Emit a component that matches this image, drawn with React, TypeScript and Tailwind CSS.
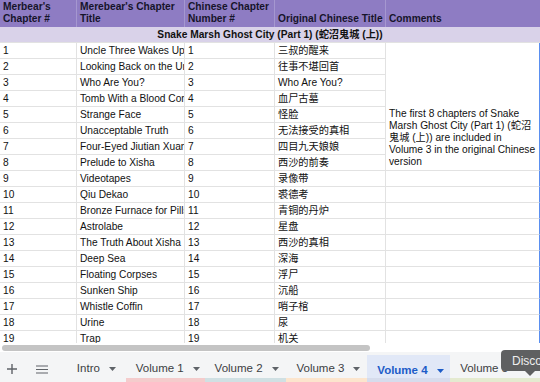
import React from "react";

const rows: [string, string, string, string][] = [
  ["1", "Uncle Three Wakes Up", "1", "三叔的醒来"],
  ["2", "Looking Back on the Unbearable Past", "2", "往事不堪回首"],
  ["3", "Who Are You?", "3", "Who Are You?"],
  ["4", "Tomb With a Blood Corpse", "4", "血尸古墓"],
  ["5", "Strange Face", "5", "怪脸"],
  ["6", "Unacceptable Truth", "6", "无法接受的真相"],
  ["7", "Four-Eyed Jiutian Xuannü", "7", "四目九天娘娘"],
  ["8", "Prelude to Xisha", "8", "西沙的前奏"],
  ["9", "Videotapes", "9", "录像带"],
  ["10", "Qiu Dekao", "10", "裘德考"],
  ["11", "Bronze Furnace for Pills", "11", "青铜的丹炉"],
  ["12", "Astrolabe", "12", "星盘"],
  ["13", "The Truth About Xisha", "13", "西沙的真相"],
  ["14", "Deep Sea", "14", "深海"],
  ["15", "Floating Corpses", "15", "浮尸"],
  ["16", "Sunken Ship", "16", "沉船"],
  ["17", "Whistle Coffin", "17", "哨子棺"],
  ["18", "Urine", "18", "尿"],
  ["19", "Trap", "19", "机关"],
];

const cell =
  "border-r border-b border-[#e2e2e2] px-[3px] leading-[15px] whitespace-nowrap overflow-hidden text-[#111]";
const hcell =
  "border-r border-[#a597d0] px-[3px] pb-[2px] flex items-end leading-[12px] font-bold whitespace-nowrap overflow-hidden text-[#16142a]";

function Arrow({ color }: { color: string }) {
  return (
    <svg width="7" height="4" viewBox="0 0 7 4" className="ml-[9px]">
      <path d="M0 0 L7 0 L3.5 4 Z" fill={color} />
    </svg>
  );
}

function Tab({
  label,
  width,
  strip,
  active,
}: {
  label: string;
  width: string;
  strip?: string;
  active?: boolean;
}) {
  return (
    <div
      className={`relative flex items-center pl-[10px] pt-[4px] ${width} ${
        active ? "bg-[#e1e8f7] mt-[3px] pt-[1px]" : ""
      }`}
    >
      <span
        className={
          active
            ? "text-[11.5px] font-bold text-[#1c5cc8]"
            : "text-[11.5px] text-[#3c4043]"
        }
      >
        {label}
      </span>
      <Arrow color={active ? "#1c5cc8" : "#5f6368"} />
      {strip ? (
        <div className={`absolute left-0 right-0 bottom-0 h-[4px] ${strip}`} />
      ) : null}
    </div>
  );
}

export default function App() {
  return (
    <div className="w-[540px] h-[382px] overflow-hidden relative bg-white font-['Liberation_Sans','Noto_Sans_CJK_SC',sans-serif] text-[10.2px]">
      <div className="h-[343px] overflow-hidden">
        <div className="grid grid-cols-[77px_108px_90px_111px_154px] grid-rows-[27px_16px_repeat(19,16px)]">
          <div className={`${hcell} bg-[#8e7cc3]`}>
            Merbear's
            <br />
            Chapter #
          </div>
          <div className={`${hcell} bg-[#8e7cc3]`}>
            Merebear's Chapter
            <br />
            Title
          </div>
          <div className={`${hcell} bg-[#8e7cc3]`}>
            Chinese Chapter
            <br />
            Number #
          </div>
          <div className={`${hcell} bg-[#8e7cc3]`}>Original Chinese Title</div>
          <div className={`${hcell} bg-[#8e7cc3] border-r-0`}>Comments</div>

          <div className="col-span-5 bg-[#d9d2e9] border-b border-[#e2e2e2] text-center font-bold leading-[15px] text-[#111]">
            Snake Marsh Ghost City (Part 1) (蛇沼鬼城 (上))
          </div>

          {rows.map((r, i) => (
            <React.Fragment key={i}>
              <div className={cell}>{r[0]}</div>
              <div className={cell}>{r[1]}</div>
              <div className={cell}>{r[2]}</div>
              <div className={cell}>{r[3]}</div>
              {i === 0 ? (
                <div className="row-span-8 border-b border-r border-b-[#e2e2e2] border-r-[#5a8ff0] px-[3px] pb-[2px] flex items-end leading-[12px] whitespace-nowrap text-[#111]">
                  <div>
                    The first 8 chapters of Snake
                    <br />
                    Marsh Ghost City (Part 1) (蛇沼
                    <br />
                    鬼城 (上)) are included in
                    <br />
                    Volume 3 in the original Chinese
                    <br />
                    version
                  </div>
                </div>
              ) : i >= 8 ? (
                <div className="border-b border-r border-b-[#e2e2e2] border-r-[#5a8ff0]" />
              ) : null}
            </React.Fragment>
          ))}
        </div>
      </div>

      <div className="h-[9px] bg-white pt-[2px]">
        <div className="ml-[2px] w-[368px] h-[6px] rounded-full bg-[#c4c4c4]" />
      </div>

      <div className="relative h-[30px] bg-[#f4f5f6] flex">
        <div className="w-[24px] flex items-center justify-center pt-[4px]">
          <svg width="10" height="10" viewBox="0 0 10 10">
            <path d="M5 0 V10 M0 5 H10" stroke="#5f6368" strokeWidth="1.4" />
          </svg>
        </div>
        <div className="w-[36px] flex items-center justify-center pt-[4px]">
          <svg width="12" height="9" viewBox="0 0 12 9">
            <path d="M0 1 H12 M0 4.5 H12 M0 8 H12" stroke="#5f6368" strokeWidth="1.2" />
          </svg>
        </div>
        <div className="w-[7px]" />
        <Tab label="Intro" width="w-[59px]" />
        <Tab label="Volume 1" width="w-[79px]" strip="bg-[#f4cccc]" />
        <Tab label="Volume 2" width="w-[82px]" strip="bg-[#d0e0e3]" />
        <Tab label="Volume 3" width="w-[81px]" strip="bg-[#fce5cd]" />
        <Tab label="Volume 4" width="w-[83px]" active strip="bg-[#d6dcec]" />
        <Tab label="Volume 5" width="w-[90px]" strip="bg-[#e4ead0]" />

        <div className="absolute left-[501px] top-[-2px] w-[80px] h-[21px] rounded-[4px] bg-[#5f6061] flex items-center pl-[11px] text-[12px] text-[#eeeeee]">
          Discover
        </div>
        <svg
          className="absolute left-[525px] top-[19px]"
          width="10"
          height="5"
          viewBox="0 0 10 5"
        >
          <path d="M0 0 L10 0 L5 5 Z" fill="#5f6061" />
        </svg>
      </div>
    </div>
  );
}
